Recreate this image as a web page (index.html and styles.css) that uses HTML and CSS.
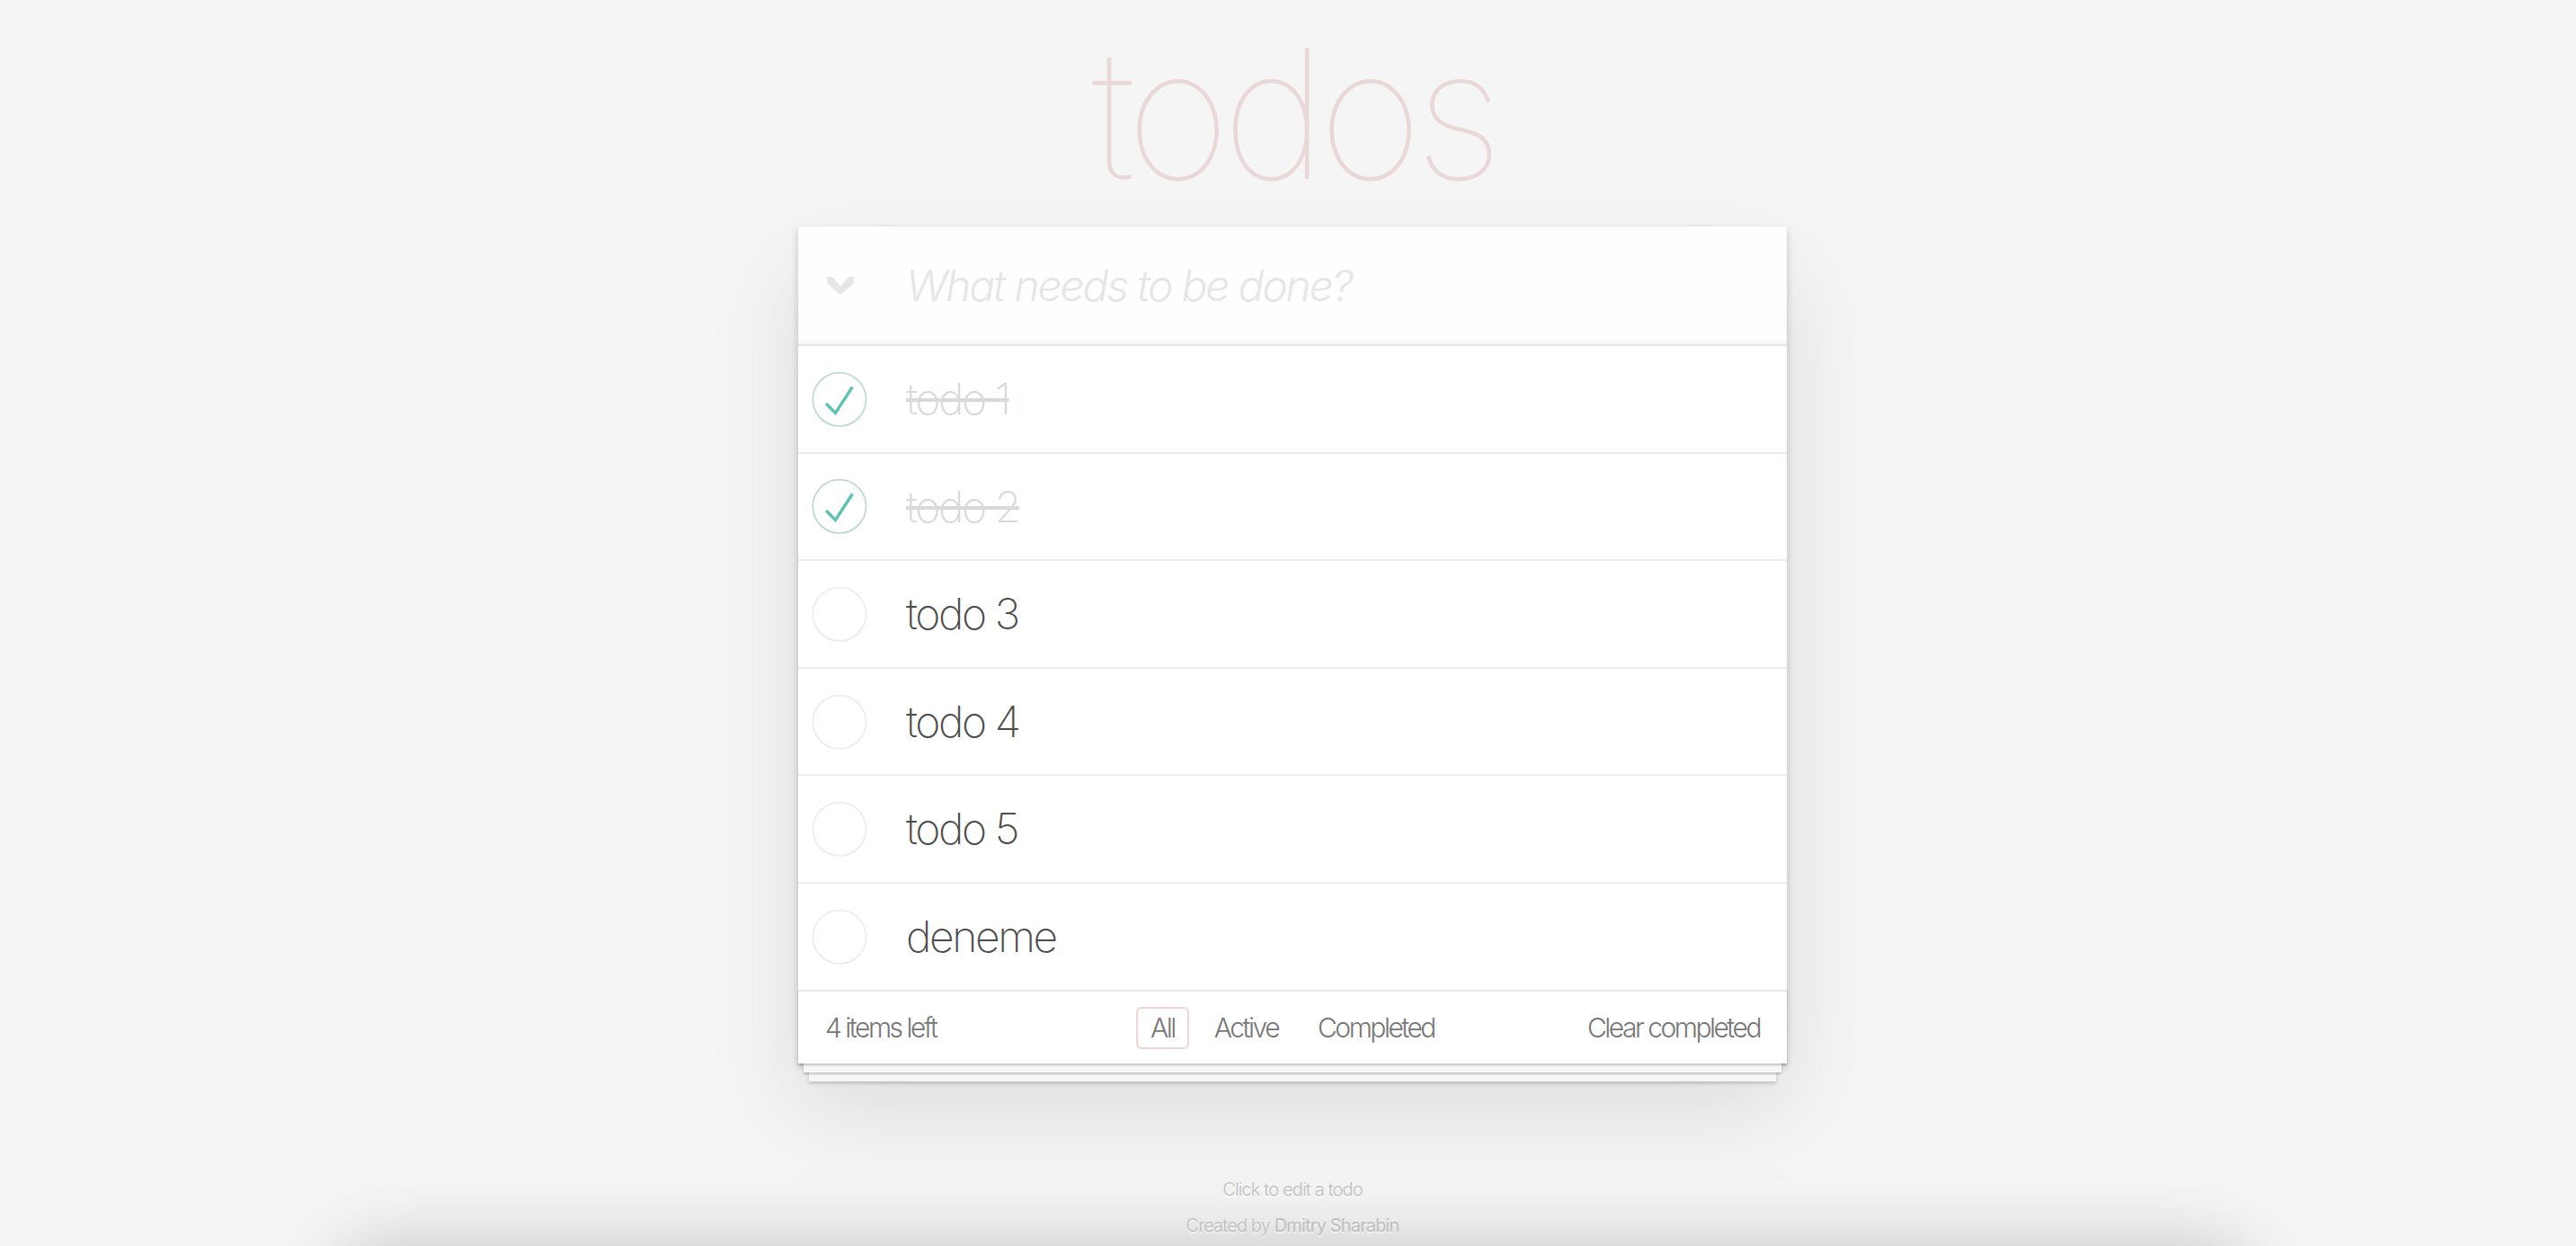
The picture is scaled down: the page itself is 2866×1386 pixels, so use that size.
FILE: index.html
```html
<!DOCTYPE html>
<html lang="en">
<head>
<meta charset="utf-8">
<title>Todos</title>
<link rel="stylesheet" href="styles.css">
</head>
<body>
<div class="page">
  <h1 class="title">todos</h1>
  <section class="todoapp">
    <header class="header">
      <label class="toggle-all" aria-label="Mark all as complete">
        <svg width="30" height="20" viewBox="0 0 30 20"><polygon points="0,0 6,0 15,10.5 24,0 30,0 30,7 15,20 0,7" fill="#e6e6e6"/></svg>
      </label>
      <input class="new-todo" placeholder="What needs to be done?">
    </header>
    <section class="main">
      <ul class="todo-list">
        <li class="item completed">
          <span class="toggle"><svg width="80" height="80" viewBox="-10 -18 100 135"><circle cx="50" cy="50" r="50" fill="none" stroke="#bddad5" stroke-width="3"/><path fill="#5dc2af" d="M72 25L42 71 27 56l-4 4 20 20 34-52z"/></svg></span>
          <label class="item-label">todo 1</label>
        </li>
        <li class="item completed">
          <span class="toggle"><svg width="80" height="80" viewBox="-10 -18 100 135"><circle cx="50" cy="50" r="50" fill="none" stroke="#bddad5" stroke-width="3"/><path fill="#5dc2af" d="M72 25L42 71 27 56l-4 4 20 20 34-52z"/></svg></span>
          <label class="item-label">todo 2</label>
        </li>
        <li class="item">
          <span class="toggle"><svg width="80" height="80" viewBox="-10 -18 100 135"><circle cx="50" cy="50" r="50" fill="none" stroke="#ededed" stroke-width="3"/></svg></span>
          <label class="item-label">todo 3</label>
        </li>
        <li class="item">
          <span class="toggle"><svg width="80" height="80" viewBox="-10 -18 100 135"><circle cx="50" cy="50" r="50" fill="none" stroke="#ededed" stroke-width="3"/></svg></span>
          <label class="item-label">todo 4</label>
        </li>
        <li class="item">
          <span class="toggle"><svg width="80" height="80" viewBox="-10 -18 100 135"><circle cx="50" cy="50" r="50" fill="none" stroke="#ededed" stroke-width="3"/></svg></span>
          <label class="item-label">todo 5</label>
        </li>
        <li class="item">
          <span class="toggle"><svg width="80" height="80" viewBox="-10 -18 100 135"><circle cx="50" cy="50" r="50" fill="none" stroke="#ededed" stroke-width="3"/></svg></span>
          <label class="item-label">deneme</label>
        </li>
      </ul>
    </section>
    <footer class="footer">
      <span class="todo-count"><strong>4</strong> items left</span>
      <ul class="filters">
        <li><a class="filter selected" href="#/">All</a></li>
        <li><a class="filter" href="#/active">Active</a></li>
        <li><a class="filter" href="#/completed">Completed</a></li>
      </ul>
      <button class="clear-completed">Clear completed</button>
    </footer>
  </section>
</div>
<div class="bottom">
  <footer class="info">
    <p>Click to edit a todo</p>
    <p>Created by <a href="#">Dmitry Sharabin</a></p>
  </footer>
  <div class="bottom-panel"></div>
</div>
</body>
</html>
```
FILE: styles.css
```css
html {
  overflow: hidden;
  background: #f5f5f5;
}

body {
  margin: 0;
  padding: 0 0 0 10px;
  background: #f5f5f5;
  color: #4d4d4d;
  font-family: Inter, "Helvetica Neue", Helvetica, Arial, sans-serif;
  font-weight: 300;
  font-size: 28px;
  line-height: 39.2px;
}

.page {
  max-width: 1100px;
  margin: 0 auto;
}

.title {
  margin: 0;
  height: 252px;
  padding-left: 2px;
  line-height: 252px;
  font-size: 200px;
  font-weight: 100;
  letter-spacing: -9px;
  text-align: center;
  color: rgba(175, 47, 47, 0.15);
}

.todoapp {
  background: #fff;
  box-shadow: 0 4px 8px 0 rgba(0, 0, 0, 0.2), 0 50px 100px 0 rgba(0, 0, 0, 0.1);
}

.header {
  display: flex;
  align-items: center;
  height: 131px;
  background: rgba(0, 0, 0, 0.003);
  box-shadow: inset 0 -4px 2px rgba(0, 0, 0, 0.03);
}

.toggle-all {
  width: 120px;
  padding-left: 32px;
  box-sizing: border-box;
  display: flex;
  align-items: center;
  height: 100%;
}

.toggle-all svg {
  display: block;
}

.new-todo {
  flex: 1;
  min-width: 0;
  height: 100%;
  box-sizing: border-box;
  margin: 0;
  padding: 32px 32px 32px 0;
  border: none;
  outline: none;
  background: transparent;
  font-family: inherit;
  font-weight: 300;
  font-size: 48px;
  line-height: 67.2px;
  color: inherit;
}

.new-todo::placeholder {
  font-style: italic;
  font-weight: 300;
  letter-spacing: -2.2px;
  color: #e6e6e6;
}

.main {
  border-top: 2px solid #e6e6e6;
}

.todo-list {
  margin: 0;
  padding: 0;
  list-style: none;
}

.item {
  display: flex;
  align-items: center;
  border-bottom: 2px solid #ededed;
  font-size: 48px;
}

.item:last-child {
  border-bottom: none;
}

.toggle {
  width: 90px;
  flex: none;
  display: flex;
  align-items: center;
}

.toggle svg {
  display: block;
}

.item-label {
  flex: 1;
  display: block;
  padding: 30px 120px 30px 30px;
  line-height: 1.2;
  font-weight: 250;
  letter-spacing: -2.4px;
  word-break: break-all;
  color: #4d4d4d;
}

.completed .item-label {
  color: #d9d9d9;
  text-decoration: line-through;
}

.footer {
  display: grid;
  grid-template-columns: 1fr auto 1fr;
  align-items: center;
  height: 40px;
  padding: 17px 30px 23px;
  border-top: 2px solid #e6e6e6;
  color: #777;
  font-size: 30px;
  letter-spacing: -2.5px;
  box-shadow: 0 2px 2px rgba(0, 0, 0, 0.2),
    0 16px 0 -6px #f6f6f6,
    0 18px 2px -6px rgba(0, 0, 0, 0.2),
    0 32px 0 -12px #f6f6f6,
    0 34px 4px -12px rgba(0, 0, 0, 0.2);
}

.todo-count {
  text-align: left;
}

.todo-count strong {
  font-weight: 300;
}

.filters {
  display: flex;
  margin: 0;
  padding: 0;
  list-style: none;
}

.filter {
  display: inline-block;
  margin: 0 6px;
  padding: 2px 14px 2px 14px;
  border: 2px solid transparent;
  border-radius: 6px;
  color: inherit;
  text-decoration: none;
  line-height: 39.2px;
}

.filter.selected {
  border-color: rgba(175, 47, 47, 0.2);
}

.clear-completed {
  justify-self: end;
  margin: 0;
  padding: 0;
  border: none;
  background: none;
  font: inherit;
  font-size: 30px;
  line-height: 39.2px;
  letter-spacing: -2.5px;
  color: inherit;
}

.bottom {
  height: 203px;
  overflow: hidden;
}

.info {
  max-width: 1100px;
  margin: 130px auto 0;
  color: #bfbfbf;
  font-size: 20px;
  letter-spacing: -0.85px;
  text-shadow: 0 2px 0 rgba(255, 255, 255, 0.5);
  text-align: center;
}

.info p {
  margin: 0 0 20px;
  line-height: 1;
}

.info a {
  color: inherit;
  text-decoration: none;
  font-weight: 400;
}

.bottom-panel {
  width: 2100px;
  height: 200px;
  margin: 27px auto 0;
  background: #f5f5f5;
  box-shadow: 0 0 90px rgba(0, 0, 0, 0.28);
}
```
